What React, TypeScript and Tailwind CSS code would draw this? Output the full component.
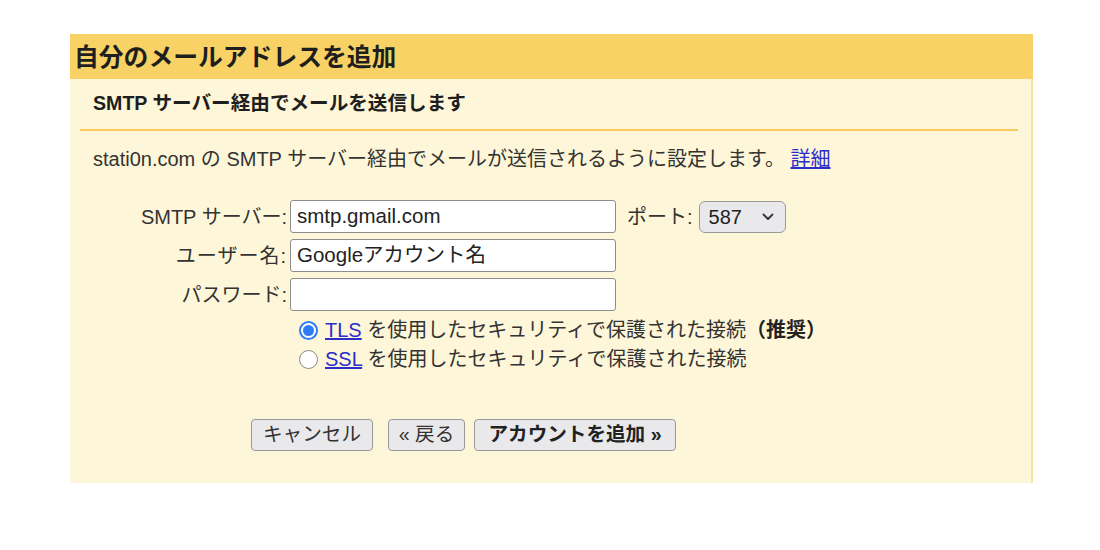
import React from "react";

const font = { fontFamily: '"Liberation Sans", "Noto Sans CJK JP", sans-serif' };

function Radio({ checked }: { checked: boolean }) {
  return checked ? (
    <span className="flex h-[19px] w-[19px] items-center justify-center rounded-full border-[2px] border-[#2f7bf5] bg-white">
      <span className="h-[11px] w-[11px] rounded-full bg-[#2f7bf5]" />
    </span>
  ) : (
    <span className="h-[19px] w-[19px] rounded-full border-[1.5px] border-[#8a8a8a] bg-white" />
  );
}

export default function App() {
  return (
    <div className="h-[550px] w-[1100px] bg-white pl-[70px] pt-[34px] text-[#222]" style={font}>
      <div className="w-[963px]">
        <div className="flex h-[45px] items-center bg-[#f9d266] pl-[4px] pt-[2px] text-[24.8px] font-bold text-[#1e1e1e]">
          自分のメールアドレスを追加
        </div>
        <div className="flex h-[404px] flex-col border-r-[2px] border-[#fbe2a2] bg-[#fef6d8]">
          <div className="pl-[23px] pt-[10px] text-[19.6px] font-bold leading-[28px] text-[#1e1e1e]">
            SMTP サーバー経由でメールを送信します
          </div>
          <div className="ml-[10px] mr-[13px] mt-[12px] h-[2px] bg-[#f8cd5e]" />
          <div className="mt-[14px] pl-[23px] text-[20px] leading-[28px] text-[#333]">
            stati0n.com の SMTP サーバー経由でメールが送信されるように設定します。{" "}
            <span className="text-[#2d2dcc] underline">詳細</span>
          </div>

          <div className="mt-[27px] flex flex-col gap-[6px] text-[20px] text-[#333]">
            <div className="flex h-[33px] items-center">
              <div className="w-[217px] text-right">SMTP サーバー:</div>
              <div className="ml-[3px] flex h-[33px] w-[326px] items-center rounded-[3px] border border-[#8d8d8d] bg-white pl-[6px] text-[20.5px] text-[#222]">
                smtp.gmail.com
              </div>
              <div className="ml-[11px]">ポート:</div>
              <div className="ml-[6px] flex h-[32px] w-[87px] items-center justify-between rounded-[6px] border border-[#9a9a9a] bg-[#e9e9ec] pl-[9px] pr-[11px] text-[20px] text-[#222]">
                <span>587</span>
                <svg width="12" height="8" viewBox="0 0 12 8" fill="none">
                  <path d="M1.5 1.5 L6 6 L10.5 1.5" stroke="#333" strokeWidth="1.8" strokeLinecap="round" strokeLinejoin="round" />
                </svg>
              </div>
            </div>
            <div className="flex h-[33px] items-center">
              <div className="w-[217px] text-right tracking-[1px]">ユーザー名:</div>
              <div className="ml-[3px] flex h-[33px] w-[326px] items-center rounded-[3px] border border-[#8d8d8d] bg-white pl-[6px] text-[20.5px] text-[#222]">
                Googleアカウント名
              </div>
            </div>
            <div className="flex h-[33px] items-center">
              <div className="w-[217px] text-right">パスワード:</div>
              <div className="ml-[3px] h-[33px] w-[326px] rounded-[3px] border border-[#8d8d8d] bg-white" />
            </div>
          </div>

          <div className="ml-[229px] mt-[5px] flex flex-col text-[20px] leading-[29px] text-[#333]">
            <div className="flex items-center gap-[7px]">
              <Radio checked />
              <span>
                <span className="text-[#2d2dcc] underline">TLS</span> を使用したセキュリティで保護された接続
                <span className="font-bold text-[#222]">（推奨）</span>
              </span>
            </div>
            <div className="flex items-center gap-[7px]">
              <Radio checked={false} />
              <span>
                <span className="text-[#2d2dcc] underline">SSL</span> を使用したセキュリティで保護された接続
              </span>
            </div>
          </div>

          <div className="ml-[181px] mt-[45px] flex items-center text-[19.6px] text-[#333]">
            <div className="flex h-[32px] w-[122px] items-center justify-center rounded-[4px] border border-[#999] bg-[#e9e9ec]">
              キャンセル
            </div>
            <div className="ml-[15px] flex h-[32px] w-[77px] items-center justify-center rounded-[4px] border border-[#999] bg-[#e9e9ec]">
              « 戻る
            </div>
            <div className="ml-[9px] flex h-[32px] w-[202px] items-center justify-center rounded-[4px] border border-[#999] bg-[#e9e9ec] font-bold text-[#222]">
              アカウントを追加 »
            </div>
          </div>
        </div>
      </div>
    </div>
  );
}
